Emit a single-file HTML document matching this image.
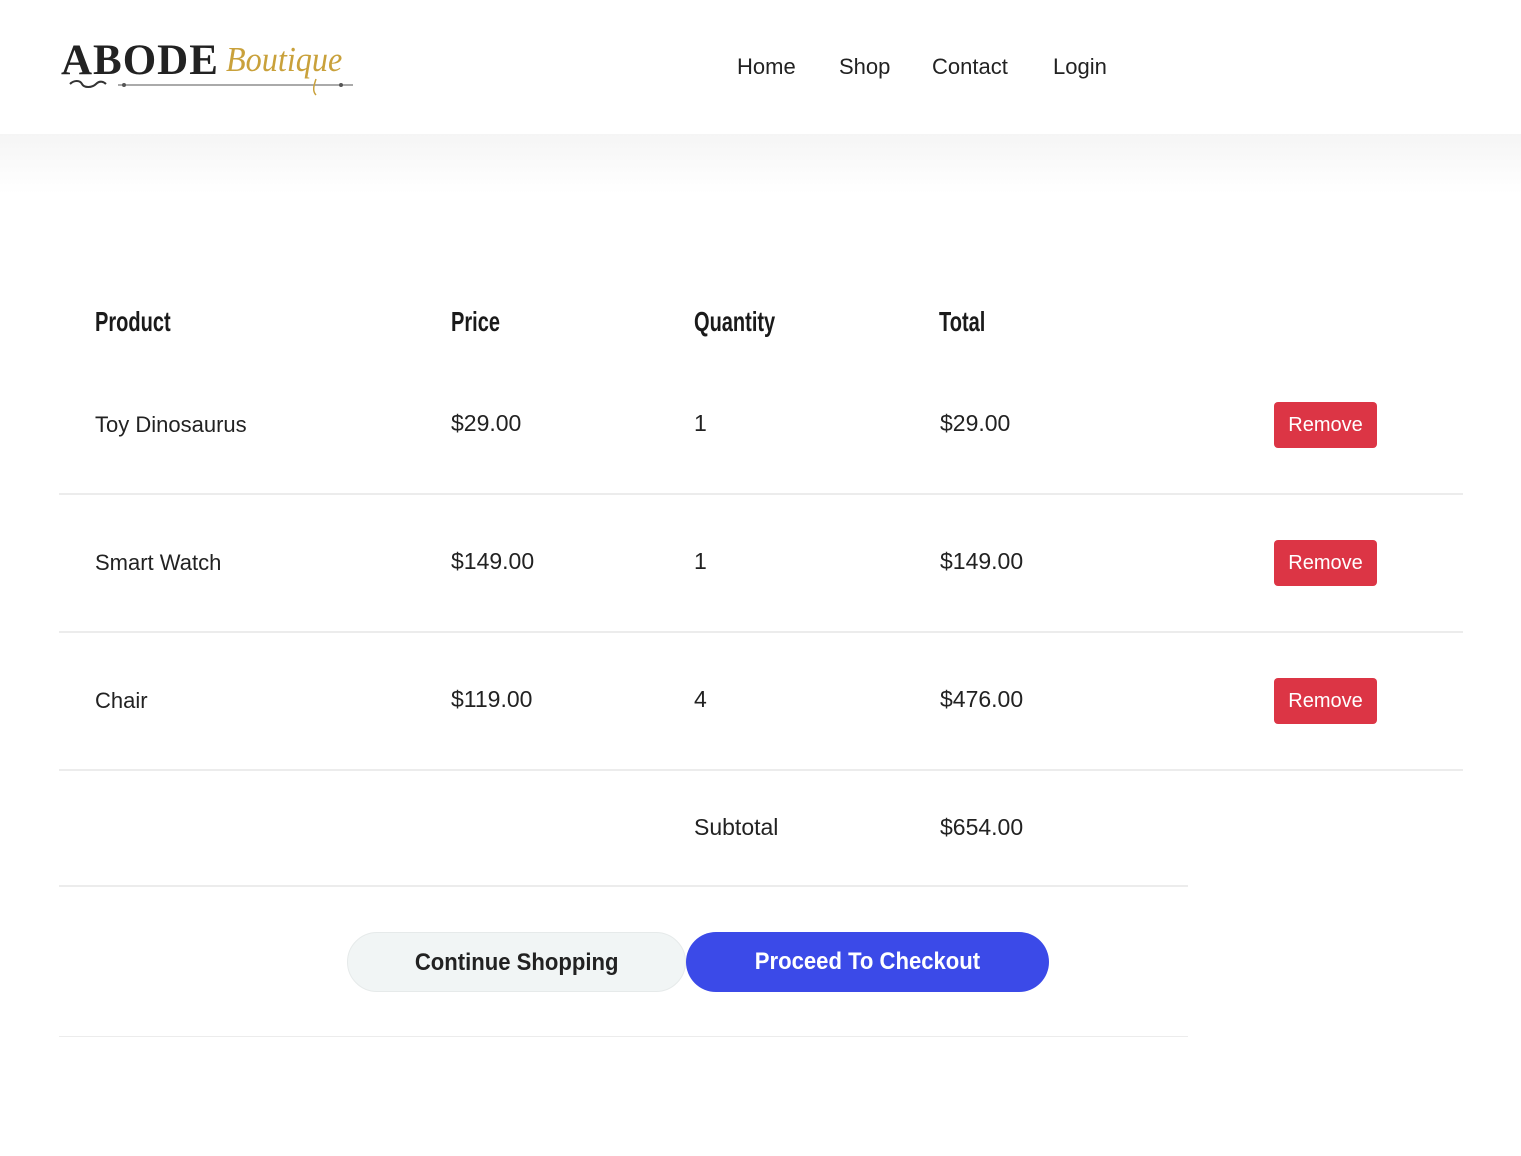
<!DOCTYPE html>
<html><head><meta charset="utf-8"><style>
*{margin:0;padding:0;box-sizing:border-box}
body{width:1521px;height:1156px;background:#fff;font-family:"Liberation Sans",sans-serif;color:#212529;position:relative;overflow:hidden}
.hdr{position:absolute;left:0;top:0;width:1521px;height:134px;background:#fff}
.shadow{position:absolute;left:0;top:134px;width:1521px;height:60px;background:linear-gradient(#f5f5f5,#fff)}
.nav a{position:absolute;top:54px;font-size:22px;color:#222;text-decoration:none}
.abs{position:absolute;white-space:nowrap}
.th{font-weight:bold;font-size:26px;color:#1a1a1a;top:306px;transform:scale(0.77,1.05);transform-origin:top left}
.td{font-size:22px;color:#222}
.num{font-size:23px;color:#222}
.line{position:absolute;left:59px;height:2px;background:#ececec}
.rm{position:absolute;left:1274px;width:103px;height:46px;background:#dc3545;border-radius:4px;color:#fff;font-size:20px;text-align:center;line-height:46px}
.btn{position:absolute;top:932px;height:60px;border-radius:30px;font-size:24px;font-weight:bold;text-align:center;line-height:60px}
.btn span{display:inline-block;transform:scaleX(0.92)}
</style></head><body>
<div class="shadow"></div>
<div class="hdr">
 <div class="abs" style="left:61px;top:36px;font-family:'Liberation Serif',serif;font-weight:bold;font-size:43px;color:#222;letter-spacing:1px">ABODE</div>
 <div class="abs" style="left:226px;top:40px;font-family:'Liberation Serif',serif;font-style:italic;font-size:35px;color:#c9a13b;transform:scaleX(0.92);transform-origin:left">Boutique</div>
 <svg class="abs" style="left:68px;top:77px" width="290" height="20"><path d="M2 7c4-4 10-4 12 0s10 4 14 0 8-2 10 0" stroke="#333" stroke-width="2" fill="none"/><line x1="50" y1="8" x2="285" y2="8" stroke="#777" stroke-width="1.2"/><circle cx="56" cy="8" r="2" fill="#555"/><circle cx="273" cy="8" r="2" fill="#555"/><path d="M248 2c-2 6-4 12 0 16" stroke="#c9a13b" stroke-width="1.5" fill="none"/></svg>
 <div class="nav"><a style="left:737px">Home</a><a style="left:839px">Shop</a><a style="left:932px">Contact</a><a style="left:1053px">Login</a></div>
</div>

<div class="abs th" style="left:95px">Product</div>
<div class="abs th" style="left:451px">Price</div>
<div class="abs th" style="left:694px">Quantity</div>
<div class="abs th" style="left:939px">Total</div>

<div class="abs td" style="left:95px;top:412px">Toy Dinosaurus</div>
<div class="abs num" style="left:451px;top:410px">$29.00</div>
<div class="abs num" style="left:694px;top:410px">1</div>
<div class="abs num" style="left:940px;top:410px">$29.00</div>
<div class="rm" style="top:402px">Remove</div>
<div class="line" style="top:493px;width:1404px"></div>

<div class="abs td" style="left:95px;top:550px">Smart Watch</div>
<div class="abs num" style="left:451px;top:548px">$149.00</div>
<div class="abs num" style="left:694px;top:548px">1</div>
<div class="abs num" style="left:940px;top:548px">$149.00</div>
<div class="rm" style="top:540px">Remove</div>
<div class="line" style="top:631px;width:1404px"></div>

<div class="abs td" style="left:95px;top:688px">Chair</div>
<div class="abs num" style="left:451px;top:686px">$119.00</div>
<div class="abs num" style="left:694px;top:686px">4</div>
<div class="abs num" style="left:940px;top:686px">$476.00</div>
<div class="rm" style="top:678px">Remove</div>
<div class="line" style="top:769px;width:1404px"></div>

<div class="abs num" style="left:694px;top:814px">Subtotal</div>
<div class="abs num" style="left:940px;top:814px">$654.00</div>
<div class="line" style="top:885px;width:1129px"></div>

<div class="btn" style="left:347px;width:339px;background:#f1f5f5;border:1px solid #e6eaea;color:#222"><span>Continue Shopping</span></div>
<div class="btn" style="left:686px;width:363px;background:#3b4ae8;color:#fff"><span>Proceed To Checkout</span></div>
<div class="line" style="top:1036px;width:1129px;height:1px"></div>
</body></html>
